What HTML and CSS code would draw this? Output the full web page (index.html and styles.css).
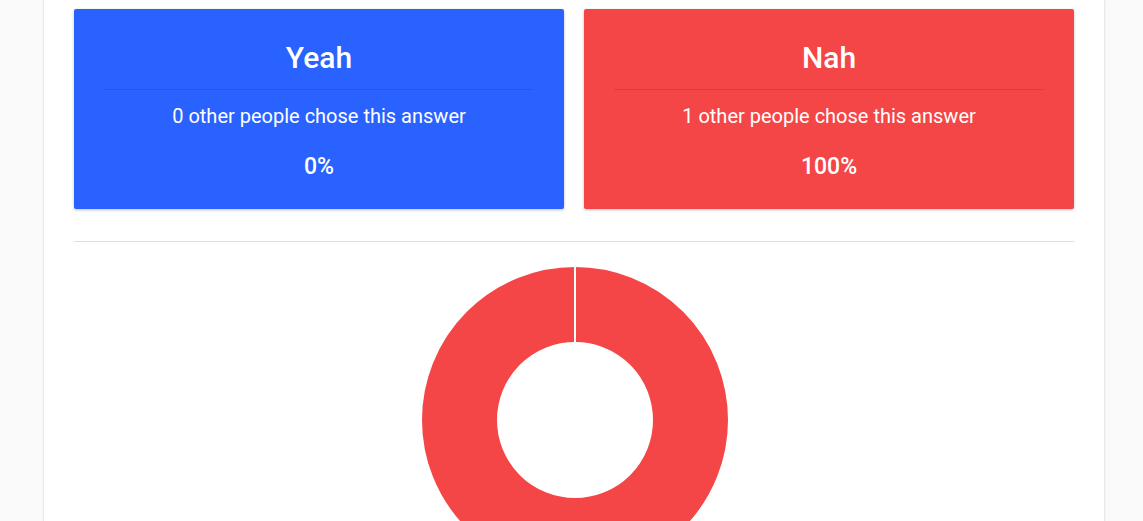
FILE: index.html
```html
<!DOCTYPE html>
<html>
<head>
<meta charset="utf-8">
<link rel="stylesheet" href="styles.css">
</head>
<body>
<div class="page">
  <div class="card">
    <div class="answers">
      <div class="answer answer-yes">
        <h2 class="answer-title">Yeah</h2>
        <p class="answer-count">0 other people chose this answer</p>
        <p class="answer-pct">0%</p>
      </div>
      <div class="answer answer-no">
        <h2 class="answer-title">Nah</h2>
        <p class="answer-count">1 other people chose this answer</p>
        <p class="answer-pct">100%</p>
      </div>
    </div>
    <hr class="divider">
    <div class="chart">
      <svg class="donut" width="306" height="306" viewBox="0 0 306 306">
        <circle cx="153" cy="153" r="115.5" fill="none" stroke="#f44646" stroke-width="75"/>
        <rect x="152" y="0" width="2" height="76" fill="#ffffff"/>
      </svg>
    </div>
  </div>
</div>
</body>
</html>
```
FILE: styles.css
```css
html, body {
  margin: 0;
  padding: 0;
  background: #fafafa;
  font-family: Roboto, "Liberation Sans", sans-serif;
  overflow: hidden;
}
.page {
  height: 521px;
  overflow: hidden;
}
.card {
  margin-left: 44px;
  width: 1060px;
  min-height: 700px;
  background: #ffffff;
  box-shadow: 0 0 2px rgba(0,0,0,0.22);
  padding: 9px 30px 0;
  box-sizing: border-box;
}
.answers {
  display: flex;
  gap: 20px;
}
.answer {
  flex: 1;
  color: #ffffff;
  text-align: center;
  border-radius: 2px;
  padding: 0 30px;
  height: 200px;
  box-sizing: border-box;
  box-shadow: 0 1px 3px rgba(0,0,0,0.25);
}
.answer-yes { background: #2962ff; }
.answer-no { background: #f44646; }
.answer-title {
  margin: 0;
  padding: 32px 0 14px;
  font-size: 30px;
  font-weight: 500;
  line-height: 34px;
  border-bottom: 1px solid rgba(0,0,0,0.1);
}
.answer-count {
  margin: 14px 0 0;
  font-size: 20px;
  line-height: 24px;
}
.answer-pct {
  margin: 26px 0 0;
  font-size: 23px;
  font-weight: 500;
  line-height: 26px;
}
.divider {
  margin: 32px 0 0;
  border: 0;
  border-top: 1px solid #e0e0e0;
  height: 0;
}
.chart {
  display: flex;
  justify-content: center;
  padding-top: 25px;
  padding-left: 2px;
}
.donut { display: block; }
```
